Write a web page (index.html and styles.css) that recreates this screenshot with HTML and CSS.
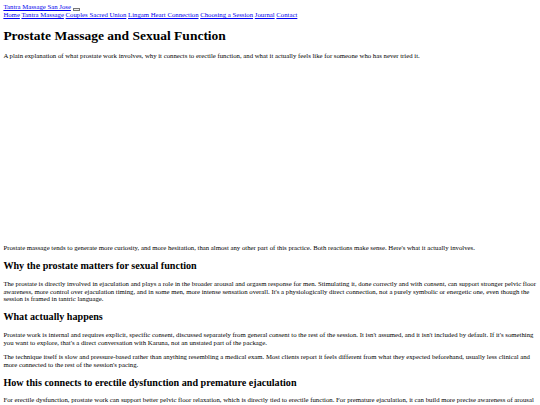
FILE: index.html
```html
<!DOCTYPE html>
<html lang="en">
<head>
<meta charset="utf-8">
<title>Prostate Massage and Sexual Function</title>
<link rel="stylesheet" href="styles.css">
</head>
<body class="page">
<header class="site-header">
<a class="brand" href="#">Tantra Massage San Jose</a> <button class="menu-toggle" aria-label="Menu"></button>
<nav class="site-nav"><a href="#">Home</a> <a href="#">Tantra Massage</a> <a href="#">Couples Sacred Union</a> <a href="#">Lingam Heart Connection</a> <a href="#">Choosing a Session</a> <a href="#">Journal</a> <a href="#">Contact</a></nav>
</header>
<main class="article">
<h1 class="title">Prostate Massage and Sexual Function</h1>
<p class="text">A plain explanation of what prostate work involves, why it connects to erectile function, and what it actually feels like for someone who has never tried it.</p>
<div class="hero-figure" aria-hidden="true"></div>
<p class="text">Prostate massage tends to generate more curiosity, and more hesitation, than almost any other part of this practice. Both reactions make sense. Here's what it actually involves.</p>
<h2 class="heading">Why the prostate matters for sexual function</h2>
<p class="text">The prostate is directly involved in ejaculation and plays a role in the broader arousal and orgasm response for men. Stimulating it, done correctly and with consent, can support stronger pelvic floor awareness, more control over ejaculation timing, and in some men, more intense sensation overall. It's a physiologically direct connection, not a purely symbolic or energetic one, even though the session is framed in tantric language.</p>
<h2 class="heading">What actually happens</h2>
<p class="text">Prostate work is internal and requires explicit, specific consent, discussed separately from general consent to the rest of the session. It isn't assumed, and it isn't included by default. If it's something you want to explore, that's a direct conversation with Karuna, not an unstated part of the package.</p>
<p class="text">The technique itself is slow and pressure-based rather than anything resembling a medical exam. Most clients report it feels different from what they expected beforehand, usually less clinical and more connected to the rest of the session's pacing.</p>
<h2 class="heading">How this connects to erectile dysfunction and premature ejaculation</h2>
<p class="text">For erectile dysfunction, prostate work can support better pelvic floor relaxation, which is directly tied to erectile function. For premature ejaculation, it can build more precise awareness of arousal and the sensations that come before the point of no return, which makes it easier to recognise and slow down.</p>
</main>
</body>
</html>
```
FILE: styles.css
```css
html {
  background: #ffffff;
}
.page {
  margin: 3.375px;
  font-family: "Liberation Serif", "Times New Roman", serif;
  font-size: 6.75px;
  line-height: 7.594px;
  color: #000000;
}
.site-header a,
.site-nav a {
  color: #0000ee;
  text-decoration: underline;
}
.site-nav {
  display: block;
}
.menu-toggle {
  display: inline-block;
  padding: 0.42px 2.53px;
  margin: 0;
  border: 0.84px solid #767676;
  background: #efefef;
  font-size: 5.6px;
  line-height: 1;
  vertical-align: baseline;
}
.title {
  font-size: 13.5px;
  line-height: 15.61px;
  font-weight: bold;
  margin: 0.67em 0;
}
.heading {
  font-size: 10.125px;
  line-height: 11.39px;
  font-weight: bold;
  margin: 0.83em 0;
}
.text {
  margin: 1em 0;
}
.hero-figure {
  height: 171px;
}
```
